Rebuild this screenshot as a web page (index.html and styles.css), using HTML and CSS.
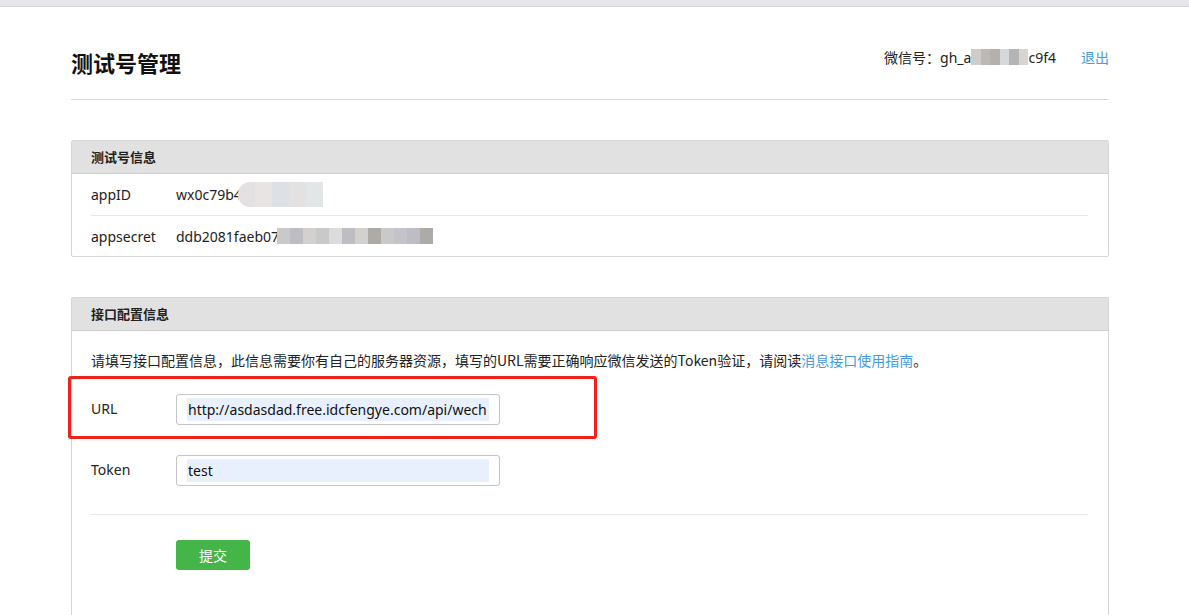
FILE: index.html
```html
<!DOCTYPE html>
<html lang="zh-CN">
<head>
<meta charset="utf-8">
<title>测试号管理</title>
<link rel="stylesheet" href="styles.css">
</head>
<body>
<div class="topbar"></div>
<div class="page">
  <header class="head">
    <h1 class="title">测试号管理</h1>
    <div class="account">
      <span class="acc-label">微信号：</span>
      <span class="acc-id">gh_a<span class="mosaic mosaic-head"><i class="t a"></i><i class="t b"></i><i class="t c"></i><i class="t d"></i><i class="t e"></i><i class="t f"></i></span>c9f4</span>
      <a class="logout" href="#">退出</a>
    </div>
  </header>

  <section class="panel">
    <div class="panel-head">测试号信息</div>
    <div class="panel-body">
      <div class="info-row">
        <span class="info-label">appID</span>
        <span class="info-val">wx0c79b4<span class="mosaic mosaic-id"><i class="t g"></i><i class="t h"></i><i class="t i"></i><i class="t g"></i><i class="t j"></i></span></span>
      </div>
      <div class="info-row">
        <span class="info-label">appsecret</span>
        <span class="info-val">ddb2081faeb07<span class="mosaic mosaic-secret"><i class="t k"></i><i class="t l"></i><i class="t m"></i><i class="t k"></i><i class="t n"></i><i class="t l"></i><i class="t m"></i><i class="t o"></i><i class="t k"></i><i class="t p"></i><i class="t l"></i><i class="t o"></i></span></span>
      </div>
    </div>
  </section>

  <section class="panel panel-cfg">
    <div class="panel-head">接口配置信息</div>
    <div class="panel-body">
      <p class="desc">请填写接口配置信息，此信息需要你有自己的服务器资源，填写的URL需要正确响应微信发送的Token验证，请阅读<a href="#" class="link">消息接口使用指南</a>。</p>
      <div class="form-row form-url">
        <label class="form-label">URL</label>
        <div class="input"><span class="fill">http://asdasdad.free.idcfengye.com/api/wech</span></div>
        <div class="highlight"></div>
      </div>
      <div class="form-row form-token">
        <label class="form-label">Token</label>
        <div class="input"><span class="fill">test</span></div>
      </div>
      <div class="form-actions">
        <button class="btn">提交</button>
      </div>
    </div>
  </section>
</div>
</body>
</html>
```
FILE: styles.css
```css
* { box-sizing: border-box; }
html, body { margin: 0; padding: 0; }
body {
  font-family: "Noto Sans", "Noto Sans CJK SC", sans-serif;
  font-size: 14px;
  color: #222;
  background: #fff;
  overflow: hidden;
}
.topbar {
  height: 7px;
  background: #e6e7eb;
  border-bottom: 1px solid #d4d4d6;
}
.page {
  width: 1038px;
  margin-left: 71px;
}
.head {
  display: flex;
  align-items: center;
  justify-content: space-between;
  height: 93px;
  padding-top: 18px;
  border-bottom: 1px solid #d9d9d9;
}
.title {
  margin: 0;
  font-size: 22px;
  font-weight: bold;
  color: #111;
  font-family: "Noto Sans CJK SC", sans-serif;
}
.account {
  display: flex;
  align-items: center;
  font-size: 14px;
  margin-top: -10px;
}
.acc-label { font-family: "Noto Sans CJK SC", sans-serif; }
.acc-id { display: inline-flex; align-items: center; }
.logout {
  margin-left: 25px;
  color: #459ae9;
  text-decoration: none;
}
.mosaic { display: inline-flex; }
.mosaic .t { display: block; }
.mosaic-head { height: 16px; }
.mosaic-head .t { width: 9.5px; height: 16px; }
.mosaic-id { height: 25px; border-radius: 12px 0 0 12px; overflow: hidden; margin-left: -4px; }
.mosaic-id .t { width: 17px; height: 25px; }
.mosaic-secret { height: 16px; margin-left: -2px; }
.mosaic-secret .t { width: 13px; height: 16px; }
.t.a { background: #cfcbc9; }
.t.b { background: #bdb8b4; }
.t.c { background: #b5b0ab; }
.t.d { background: #d6d8d9; }
.t.e { background: #b2b4b6; }
.t.f { background: #d8d4d2; }
.t.g { background: #e3e1e2; }
.t.h { background: #e8e4e4; }
.t.i { background: #dde0e5; }
.t.j { background: #e2e6e6; }
.t.k { background: #c9c9c9; }
.t.l { background: #bdbdc3; }
.t.m { background: #d3d0cd; }
.t.n { background: #dcdcdc; }
.t.o { background: #aeaaa6; }
.t.p { background: #c3c3ca; }

.panel {
  margin-top: 40px;
  border: 1px solid #d6d6d6;
  border-radius: 2px;
}
.panel-head {
  height: 33px;
  line-height: 32px;
  background: #e1e1e1;
  border-bottom: 1px solid #cfcfcf;
  padding-left: 19px;
  font-size: 13px;
  font-weight: bold;
  color: #222;
  font-family: "Noto Sans CJK SC", sans-serif;
}
.panel-body { padding: 0 20px 0 19px; }
.info-row {
  display: flex;
  align-items: center;
  height: 41px;
}
.info-row + .info-row { border-top: 1px solid #e6e6e6; }
.info-label { width: 85px; }
.info-val { display: inline-flex; align-items: center; }

.panel-cfg { border-bottom: none; height: 330px; }
.desc {
  margin: 0;
  padding-top: 19px;
  line-height: 20px;
  font-family: "Noto Sans CJK SC", sans-serif;
}
.link { color: #459ae9; text-decoration: none; }
.form-row {
  position: relative;
  display: flex;
  align-items: center;
}
.form-url { margin-top: 24px; }
.form-token { margin-top: 30px; }
.form-label { width: 85px; margin-top: -3px; }
.input {
  width: 324px;
  height: 31px;
  border: 1px solid #c4c4c4;
  border-radius: 3px;
  padding: 3px 10px 3px 10px;
  display: flex;
  align-items: center;
  overflow: hidden;
}
.fill {
  display: block;
  width: 302px;
  height: 23px;
  line-height: 23px;
  background: #e8f0fe;
  padding-left: 1px;
  white-space: nowrap;
  overflow: hidden;
  color: #111;
}
.highlight {
  position: absolute;
  left: -23px;
  top: -18px;
  width: 529px;
  height: 63px;
  border: 3px solid #f0201a;
  border-radius: 3px;
  pointer-events: none;
}
.form-actions {
  margin-top: 28px;
  border-top: 1px solid #e6e6e6;
  padding: 25px 0 0 85px;
}
.btn {
  width: 74px;
  height: 30px;
  border: none;
  border-radius: 3px;
  background: #44b549;
  color: #fff;
  font-size: 14px;
  font-family: "Noto Sans CJK SC", sans-serif;
  padding: 0;
}
```
